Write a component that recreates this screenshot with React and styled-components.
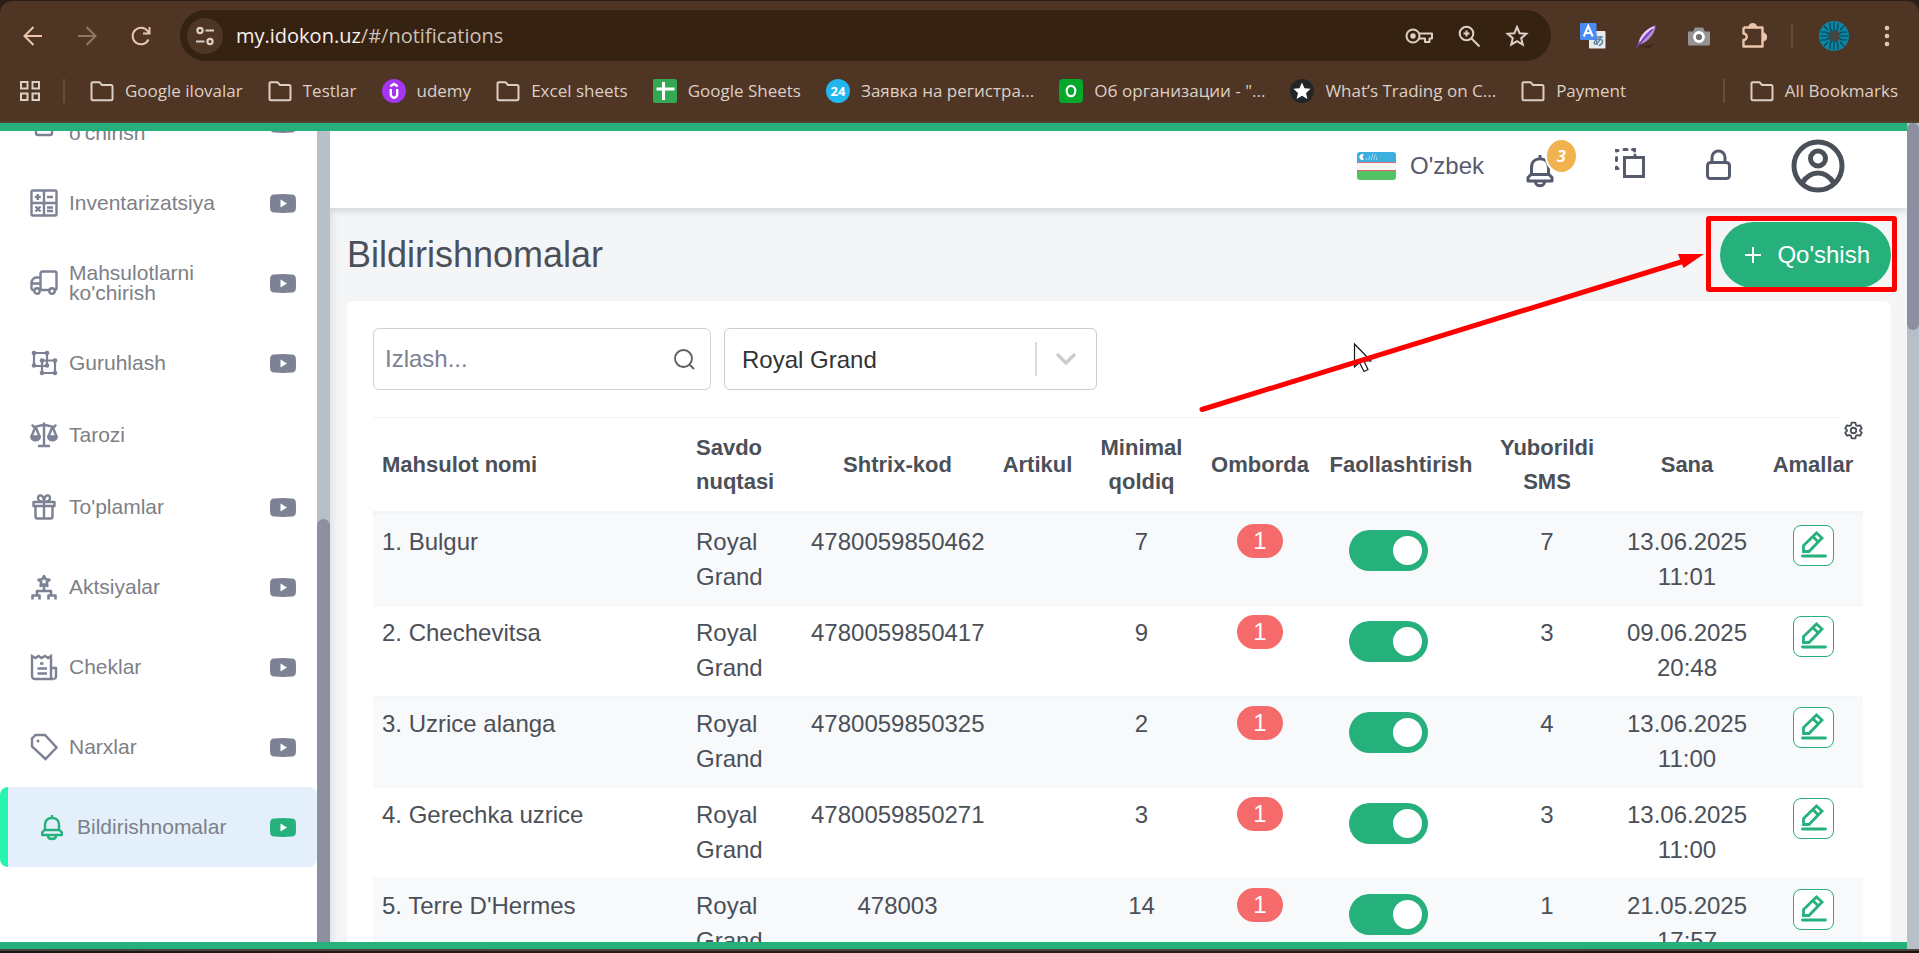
import React from "react";
import styled, { createGlobalStyle, css } from "styled-components";

const GREEN = "#25b07c";
const SLATE = "#7c8193";

const GlobalStyle = createGlobalStyle`
  * { box-sizing: border-box; }
  body {
    margin: 0;
    font-family: "Liberation Sans", Arial, sans-serif;
    color: #4b5058;
  }
  button, input, select { font: inherit; color: inherit; }
  svg { display: block; flex: none; }
`;

const Window = styled.div`
  height: 100vh;
  display: flex;
  flex-direction: column;
  overflow: hidden;
  background: #2a1d16;
`;

/* ---------- browser chrome ---------- */

const Chrome = styled.header`
  flex: none;
  margin-top: 1px;
  padding-top: 9px;
  background: #4e3524;
  border-radius: 12px 12px 0 0;
  border-bottom: 2px solid #55402f;
  color: #dccfc6;
  font-family: "Open Sans", "Noto Sans", sans-serif;
`;

const Toolbar = styled.div`
  display: flex;
  align-items: center;
  height: 51px;
  padding: 0 20px 0 21px;
`;

const IconButton = styled.button`
  display: flex;
  align-items: center;
  justify-content: center;
  flex: none;
  width: ${(p) => p.$size || 24}px;
  height: ${(p) => p.$size || 24}px;
  padding: 0;
  border: 0;
  background: none;
  color: ${(p) => p.$color || "inherit"};
`;

const NavButtons = styled.div`
  display: flex;
  gap: 30px;
  color: #ecc6ac;
`;

const Omnibox = styled.div`
  flex: 1;
  display: flex;
  align-items: center;
  height: 51px;
  margin: 0 30px 0 27px;
  padding: 0 22px 0 7px;
  border-radius: 26px;
  background: #352211;
`;

const SiteInfo = styled(IconButton)`
  width: 36px;
  height: 36px;
  border-radius: 50%;
  background: #4e3524;
`;

const Address = styled.div`
  flex: 1;
  margin-left: 13px;
  font-size: 20px;
  line-height: 28px;
  white-space: nowrap;
  color: #cdc0b6;
`;

const Host = styled.span`
  color: #f7f1ec;
`;

const OmniActions = styled.div`
  display: flex;
  align-items: center;
  gap: 24px;
`;

const Extensions = styled.div`
  display: flex;
  align-items: center;
  gap: 29px;
`;

const ExtensionList = styled.div`
  display: flex;
  align-items: center;
  gap: 29px;
  margin-right: -6px;
`;

const Divider = styled.span`
  flex: none;
  width: 2px;
  height: 24px;
  background: #6b4c33;
`;

const Bookmarks = styled.nav`
  display: flex;
  align-items: center;
  height: 60px;
  padding: 0 21px 0 18px;
  font-size: 17px;
  line-height: 24px;
`;

const BookmarkList = styled.div`
  flex: 1;
  display: flex;
  align-items: center;
  gap: 25px;
  margin-left: 21px;
`;

const Bookmark = styled.a`
  display: flex;
  align-items: center;
  gap: 11px;
  color: #dccfc6;
  text-decoration: none;
  white-space: nowrap;
`;

const AllBookmarks = styled.div`
  display: flex;
  align-items: center;
  gap: 25px;
`;

/* ---------- page ---------- */

const Page = styled.div`
  flex: 1;
  min-height: 0;
  display: flex;
`;

const Frame = styled.div`
  flex: 1;
  min-width: 0;
  position: relative;
  display: flex;
  background: #f4f5f7;
`;

const EdgeBar = styled.div`
  position: absolute;
  z-index: 5;
  left: 0;
  right: 0;
  ${(p) => (p.$bottom ? "bottom: 0; height: 7px;" : "top: 0; height: 8px;")}
  background: ${GREEN};
`;

const ScrollTrack = styled.div`
  flex: none;
  display: flex;
  flex-direction: column;
  justify-content: ${(p) => (p.$end ? "flex-end" : "flex-start")};
  width: ${(p) => p.$width}px;
  background: #b7bfc8;
`;

const ScrollThumb = styled.div`
  height: ${(p) => p.$share}%;
  border-radius: 7px;
  background: #8b8f9f;
`;

const Taskbar = styled.div`
  flex: none;
  height: 4px;
  border-top: 2px solid #4a423e;
  background: linear-gradient(90deg, #16181c, #2a1712 20%, #2b1c12 60%, #1c130d);
`;

/* ---------- sidebar ---------- */

const Sidebar = styled.nav`
  flex: none;
  display: flex;
  flex-direction: column;
  justify-content: flex-end;
  width: 317px;
  padding-bottom: 82px;
  overflow: hidden;
  background: #fff;
  font-size: 21px;
  line-height: 20px;
`;

const MenuItem = styled.a`
  flex: none;
  display: flex;
  align-items: center;
  height: ${(p) => (p.$compact ? 64 : 80)}px;
  padding: 0 21px 0 30px;
  color: ${SLATE};
  text-decoration: none;
  ${(p) =>
    p.$active &&
    css`
      border-left: 8px solid #27f5ac;
      border-radius: 8px;
      background: #e3f0fc;
      color: ${GREEN};
    `}
`;

const MenuLabel = styled.span`
  flex: 1;
  max-width: 160px;
  margin: 0 auto 0 11px;
  color: #7d8087;
`;

const VideoLink = styled.span`
  margin-left: auto;
`;

/* ---------- main ---------- */

const Main = styled.main`
  flex: 1;
  min-width: 0;
  display: flex;
  flex-direction: column;
  overflow: hidden;
  box-shadow: inset 5px 0 8px -4px rgba(60, 70, 90, 0.15);
`;

const TopBar = styled.div`
  flex: none;
  position: relative;
  display: flex;
  align-items: center;
  justify-content: flex-end;
  gap: 60px;
  height: 85px;
  padding-right: 62px;
  background: #fff;
  box-shadow: 0 2px 8px rgba(50, 60, 80, 0.2);
  color: #555a6e;
`;

const Language = styled.button`
  display: flex;
  align-items: center;
  gap: 14px;
  margin-right: -18px;
  padding: 0;
  border: 0;
  background: none;
  font-size: 24px;
  line-height: 28px;
`;

const BellButton = styled.button`
  position: relative;
  padding: 10px 0 0;
  border: 0;
  background: none;
`;

const Count = styled.span`
  position: absolute;
  top: -6px;
  left: 19px;
  width: 33px;
  height: 36px;
  border: 2px solid #fff;
  border-radius: 50%;
  background: #f0b350;
  color: #fff;
  font-family: "Open Sans", sans-serif;
  font-size: 16px;
  font-style: italic;
  font-weight: 700;
  line-height: 32px;
  text-align: center;
`;

const Content = styled.div`
  flex: 1;
  min-height: 0;
  position: relative;
  display: flex;
  flex-direction: column;
  padding: 0 16px 0 17px;
`;

const TitleRow = styled.div`
  flex: none;
  display: flex;
  align-items: center;
  justify-content: space-between;
  height: 93px;
`;

const Title = styled.h1`
  margin: 0;
  font-size: 36px;
  font-weight: 400;
  line-height: 44px;
`;

const AddWrap = styled.div`
  position: relative;
`;

const AddButton = styled.button`
  display: flex;
  align-items: center;
  gap: 16px;
  height: 66px;
  padding: 0 21px 0 25px;
  border: 0;
  border-radius: 33px;
  background: ${GREEN};
  color: #fff;
  font-size: 24px;
`;

const Highlight = styled.div`
  position: absolute;
  inset: -6px -6px -4px -14px;
  border: 5px solid #f00;
  border-radius: 3px;
  pointer-events: none;
`;

const Pointer = styled.svg`
  position: absolute;
  top: 36px;
  right: 200px;
  pointer-events: none;
`;

const Card = styled.section`
  flex: 1 0 auto;
  padding: 27px 28px 0 26px;
  border-radius: 7px 7px 0 0;
  background: #fff;
`;

const Filters = styled.div`
  display: flex;
  gap: 13px;
  margin-bottom: 27px;
  font-size: 24px;
`;

const SearchField = styled.label`
  display: flex;
  align-items: center;
  width: 338px;
  height: 62px;
  padding: 0 14px 0 11px;
  border: 1px solid #ced2db;
  border-radius: 6px;
`;

const SearchInput = styled.input`
  flex: 1;
  min-width: 0;
  padding: 0;
  border: 0;
  outline: 0;
  background: none;
  &::placeholder { color: ${SLATE}; opacity: 1; }
`;

const SelectField = styled.label`
  display: flex;
  align-items: center;
  position: relative;
  width: 373px;
  height: 62px;
  border: 1px solid #ccc;
  border-radius: 6px;
`;

const Select = styled.select`
  width: 100%;
  height: 100%;
  padding: 0 80px 0 17px;
  border: 0;
  border-radius: 6px;
  appearance: none;
  background: none;
  color: #333;
`;

const SelectMark = styled.svg`
  position: absolute;
  right: 18px;
  pointer-events: none;
`;

/* ---------- table ---------- */

const TableWrap = styled.div`
  position: relative;
`;

const TableSettings = styled.button`
  position: absolute;
  top: 0;
  right: 0;
  padding: 4px 0 0 2px;
  border: 0;
  background: #fff;
`;

const Table = styled.table`
  width: 100%;
  table-layout: fixed;
  border-collapse: separate;
  border-spacing: 0;
`;

const Th = styled.th`
  padding: 13px 9px 12px;
  border-top: 1px solid #f1f3f5;
  border-bottom: 3px solid #f3f4f6;
  font-size: 22px;
  line-height: 34px;
  text-align: ${(p) => (p.$left ? "left" : "center")};
`;

const Row = styled.tr`
  &:nth-child(odd) { background: #f8f9fb; }
`;

const Td = styled.td`
  height: 91px;
  padding: 9px 9px;
  border-top: 1px solid #f4f5f7;
  font-size: 24px;
  line-height: 35px;
  vertical-align: top;
  text-align: ${(p) => (p.$left ? "left" : "center")};
`;

const Stock = styled.span`
  display: block;
  width: 46px;
  margin: 0 auto;
  border-radius: 17px;
  background: #f56a6b;
  color: #fff;
  line-height: 34px;
`;

const Toggle = styled.input`
  appearance: none;
  display: flex;
  align-items: center;
  width: 79px;
  height: 41px;
  margin: 6px 0 0 21px;
  padding: 6px;
  border-radius: 21px;
  background: #b7bfc8;
  &::before {
    content: "";
    width: 29px;
    height: 29px;
    border-radius: 50%;
    background: #fff;
  }
  &:checked { justify-content: flex-end; background: ${GREEN}; }
`;

const EditButton = styled.button`
  display: block;
  width: 41px;
  height: 41px;
  margin: 1px auto 0;
  padding: 0;
  border: 1px solid ${GREEN};
  border-radius: 8px;
  background: #fff;
  color: ${GREEN};
`;

/* ---------- drawings ---------- */

const Line = ({ size = 24, box = 24, sw = 2, children, ...rest }) => (
  <svg
    width={size}
    height={size}
    viewBox={`0 0 ${box} ${box}`}
    fill="none"
    stroke="currentColor"
    strokeWidth={sw}
    strokeLinejoin="round"
    aria-hidden="true"
    {...rest}
  >
    {children}
  </svg>
);

const FolderIcon = () => (
  <Line>
    <path d="M1.500 5.200V20a1.300 1.300 0 0 0 1.300 1.300h18.400a1.300 1.300 0 0 0 1.300-1.300V7.300A1.300 1.300 0 0 0 21.200 6H12L9.500 3.200H2.800A1.300 1.300 0 0 0 1.500 4.500z" />
  </Line>
);

const AppsIcon = () => (
  <Line>
    <path strokeLinejoin="miter" d="M3 3h6.500v6.500H3zM14.500 3H21v6.500h-6.500zM3 14.500h6.500V21H3zM14.500 14.500H21V21h-6.500z" />
  </Line>
);

const BadgeText = styled.text`
  font-family: "Open Sans", sans-serif;
  font-size: 13px;
  font-weight: 700;
  fill: #fff;
`;

const UdemyIcon = () => (
  <svg width="24" height="24" viewBox="0 0 24 24" aria-hidden="true">
    <circle cx="12" cy="12" r="12" fill="#a435f0" />
    <path d="M8.800 10v5.500a3.200 3.200 0 0 0 6.400 0V10M8.300 7.200 12 5l3.700 2.200" fill="none" stroke="#fff" strokeWidth="2.400" />
  </svg>
);

const SheetsIcon = () => (
  <svg width="24" height="24" viewBox="0 0 24 24" aria-hidden="true">
    <rect width="24" height="24" rx="2" fill="#34a853" />
    <path d="M10.500 3v18M3.500 10h18" stroke="#fff" strokeWidth="3" />
  </svg>
);

const TwentyFourIcon = () => (
  <svg width="24" height="24" viewBox="0 0 24 24" aria-hidden="true">
    <circle cx="12" cy="12" r="12" fill="#21b6ec" />
    <BadgeText x="12" y="16.500" textAnchor="middle">24</BadgeText>
  </svg>
);

const LetterIcon = () => (
  <svg width="24" height="24" viewBox="0 0 24 24" aria-hidden="true">
    <rect width="24" height="24" rx="4" fill="#04a82b" />
    <ellipse cx="12" cy="12" rx="4.300" ry="5.200" fill="none" stroke="#fff" strokeWidth="2.200" />
  </svg>
);

const StarDiscIcon = () => (
  <svg width="24" height="24" viewBox="0 0 24 24" aria-hidden="true">
    <circle cx="12" cy="12" r="12" fill="#222426" />
    <path d="m12 3.500 2.500 5.800 6.100.500-4.600 4.100 1.400 6.100L12 16.800 6.600 20 8 13.900 3.400 9.800l6.100-.500z" fill="#fff" />
  </svg>
);

const BackIcon = () => (
  <Line><path d="M21 12H4M12.500 3 3.500 12l9 9" strokeLinejoin="miter" /></Line>
);
const ForwardIcon = () => (
  <Line><path d="M3 12h17M11.500 3l9 9-9 9" strokeLinejoin="miter" /></Line>
);
const ReloadIcon = () => (
  <Line><path d="M19.500 15.500A8.300 8.300 0 1 1 18.600 7l1.500 2M20.500 3v6.500H14" strokeLinejoin="miter" /></Line>
);
const TuneIcon = () => (
  <Line size={24} sw={2.2}>
    <circle cx="7" cy="6.500" r="2.600" />
    <circle cx="17" cy="17.500" r="2.600" />
    <path d="M12.500 6.500H21M3 17.500h8.500" />
  </Line>
);
const KeyIcon = () => (
  <Line size={28} box={28}>
    <circle cx="8" cy="14" r="6.500" />
    <circle cx="8" cy="14" r="2.700" fill="currentColor" stroke="none" />
    <path d="M14 11.500h13v5h-2.500v3.500h-4.500v-3.500h-6" />
  </Line>
);
const ZoomIcon = () => (
  <Line>
    <circle cx="9.500" cy="9.500" r="6.800" />
    <path d="m14.500 14.500 8 8M9.500 6.500v6M6.500 9.500h6" />
  </Line>
);
const StarIcon = () => (
  <Line><path strokeLinejoin="miter" d="m12 3 2.600 6.200 6.700.600-5.100 4.400 1.600 6.500L12 17.200l-5.800 3.500 1.600-6.500L2.700 9.800l6.700-.600z" /></Line>
);
const TranslateIcon = () => (
  <svg width="26" height="26" viewBox="0 0 26 26" aria-hidden="true">
    <rect x="9" y="8" width="16.500" height="17.500" rx="1" fill="#e8ebee" />
    <path d="M12 14h11M16 11.500c0 5 0 8 1.500 10.500M21 13c-1 5-4 8.500-6 8s0-4.500 3-5 5 1 4.500 3-2 3-3.500 3.500" fill="none" stroke="#5f86a3" strokeWidth="1.500" />
    <rect width="16.500" height="17" rx="1" fill="#4a8af4" />
    <path d="M3.800 13.500 8.200 3l4.500 10.500M5.500 10h5.500" fill="none" stroke="#fff" strokeWidth="2.100" />
  </svg>
);
const FeatherIcon = () => (
  <svg width="24" height="26" viewBox="0 0 24 26" aria-hidden="true">
    <path d="M4 24c5 0 12-1 16-4l-4 4.500z" fill="#33231a" />
    <path d="M22 2C13 5 5 12 4 22c8-2 16-8 18-20z" fill="#b58ade" />
    <path d="M22 2C16 9 9 16 2.500 24.500" fill="none" stroke="#6d38a8" strokeWidth="1.500" />
    <path d="M20.500 4C13 7 8 12 6 18" fill="none" stroke="#eadcf7" strokeWidth="1.500" />
  </svg>
);
const CameraIcon = () => (
  <svg width="24" height="24" viewBox="0 0 24 24" aria-hidden="true">
    <path d="M1 7.500h5l2-4h8l2 4h5V20a1.500 1.500 0 0 1-1.500 1.500h-19A1.500 1.500 0 0 1 1 20z" fill="#949494" />
    <circle cx="12" cy="13" r="4.500" fill="#6f6f6f" stroke="#fff" strokeWidth="2.800" />
  </svg>
);
const PuzzleIcon = () => (
  <Line size={26} box={26} sw={2.4}>
    <path d="M2.500 4.500h6.500M2.500 4.500v6a3.200 3.200 0 0 1 0 6.500v6.500h19v-6M21.500 10.500v-6H15" />
    <path d="M8.500 4.500a3 3 0 0 1 6.500 0zM21.500 10.500a3.200 3.200 0 0 1 0 7z" fill="currentColor" />
  </Line>
);
const ProfileIcon = () => (
  <svg width="30" height="30" viewBox="0 0 30 30" aria-hidden="true">
    <circle cx="15" cy="15" r="15" fill="#0b86a2" />
    <g stroke="#073f52" strokeWidth="1.200" fill="none">
      <path d="M15 1v9M11 2v5l2 3M19 2v5l-2 3M15 29v-9M11 28v-5l2-3M19 28v-5l-2-3M1 15h9M2 11h5l3 2M2 19h5l3-2M29 15h-9M28 11h-5l-3 2M28 19h-5l-3-2M5 5l4 4M25 5l-4 4M5 25l4-4M25 25l-4-4" />
    </g>
    <rect x="10" y="10" width="10" height="10" rx="1" fill="#454545" />
  </svg>
);
const DotsIcon = () => (
  <svg width="6" height="24" viewBox="0 0 6 24" fill="currentColor" aria-hidden="true">
    <circle cx="3" cy="4" r="2.300" /><circle cx="3" cy="12" r="2.300" /><circle cx="3" cy="20" r="2.300" />
  </svg>
);

const VideoIcon = () => (
  <svg width="26" height="19" viewBox="0 0 26 19" aria-hidden="true">
    <path d="M4 .400Q13-.200 22 .400q3.500.200 3.800 3.600.400 5.500 0 11-.300 3.400-3.800 3.600-9 .600-18 0Q.500 18.400.200 15q-.400-5.500 0-11Q.500.600 4 .400z" fill="currentColor" />
    <path d="m10.500 5.500 6.500 4-6.500 4z" fill="#fff" />
  </svg>
);

const Menu28 = (props) => <Line size={28} box={28} sw={2.4} {...props} />;

const BoxIcon = () => <Menu28><rect x="6" y="2" width="16" height="24" rx="2" /></Menu28>;
const InventoryIcon = () => (
  <Menu28>
    <rect x="1.500" y="1.500" width="25" height="25" rx="1.500" />
    <path d="M14 1.500v25M1.500 14h25M7.800 5v6M4.800 8h6M17 8h6M5.500 17.500l5 5M10.500 17.500l-5 5M17 18.500h6M17 22h6" />
  </Menu28>
);
const TruckIcon = () => (
  <Menu28>
    <path d="M10.500 21V4.500a2 2 0 0 1 2-2h12a2 2 0 0 1 2 2V19a2 2 0 0 1-2 2M10.500 21h8.500M4 21.500a2.500 2.500 0 0 1-2.500-2.500v-5c0-2.500 2-5.500 5-5.500h4M2 14.500h8.500" />
    <circle cx="7" cy="22" r="2.700" /><circle cx="22" cy="22" r="2.700" />
  </Menu28>
);
const GroupIcon = () => (
  <Menu28 sw={2.2}>
    <path d="M4 4h13v13H4zM12 11.500h13V24H12z" />
    <g fill="currentColor" stroke="none">
      {[[4, 4], [17, 4], [4, 16.5], [17, 16.5], [12, 11.5], [25, 11.5], [12, 24], [25, 24]].map(([x, y]) => (
        <circle key={`${x}-${y}`} cx={x} cy={y} r="2.300" />
      ))}
    </g>
  </Menu28>
);
const ScalesIcon = () => (
  <Menu28>
    <path d="M14 1.500v23M8 25h12M3 5.500c5 1 6-1.500 11-1.500s6 2.500 11 1.500M5.500 5.500l-4 10M5.500 5.500l4 10M22.500 5.500l-4 10M22.500 5.500l4 10M2 3.500l1.500 2.500M26 3.500l-1.500 2.500" />
    <path d="M1.300 15.500h8.500c0 5-8.500 5-8.500 0zM18.200 15.500h8.500c0 5-8.500 5-8.500 0z" fill="currentColor" />
  </Menu28>
);
const GiftIcon = () => (
  <Menu28>
    <path d="M3.500 9h21v4h-21zM5.500 13h17v10.500a2 2 0 0 1-2 2h-13a2 2 0 0 1-2-2zM14 9v16.500M14 9c-3 0-6-1-6-4 0-4 6-4 6 4zM14 9c3 0 6-1 6-4 0-4-6-4-6 4z" />
  </Menu28>
);
const PromoIcon = () => (
  <Menu28 sw={2.6}>
    <path d="m14 3 1.600 3.200 3.900.500-2.800 2.600.700 3.700-3.400-1.700-3.400 1.700.700-3.700-2.800-2.600 3.900-.500zM14 13v5M7 22v-4h14v4M2.500 26.500v-4h7v4M18.500 26.500v-4h7v4" />
  </Menu28>
);
const ReceiptIcon = () => (
  <Menu28>
    <path strokeLinejoin="miter" d="M2 3l3.500 2 3-2 3 2 3.500-2 3 2 3-2v20.500c0 2 1 2.500 2.500 2.500H5a3 3 0 0 1-3-3z" />
    <path d="M21.500 15H26v8.500a2.500 2.500 0 0 1-2.500 2.500M10 10.500h3.500M7.500 15.500H17M7.500 20.500H17" />
  </Menu28>
);
const TagIcon = () => (
  <Menu28>
    <path strokeLinejoin="miter" d="M2 5.500 5.500 2H15l11.500 12.500L15.500 26 2 13.500z" />
    <circle cx="8" cy="8" r="1.500" fill="currentColor" stroke="none" />
  </Menu28>
);

const BellIcon = ({ width, height }) => (
  <svg width={width} height={height} viewBox="0 0 28 34" fill="none" stroke="currentColor" strokeWidth="3" strokeLinejoin="round" aria-hidden="true">
    <path d="M14 1v3.500M5.500 20.500v-7C5.500 8 9 4.800 14 4.800s8.500 3.200 8.500 8.700v7" />
    <path d="M5 20.500h18l3 3v3.500H2v-3.500zM9.500 28c0 5 9 5 9 0" />
  </svg>
);
const MenuBell = () => (
  <svg width="28" height="28" viewBox="0 0 28 28" fill="none" stroke="currentColor" strokeWidth="2.400" strokeLinejoin="round" aria-hidden="true">
    <path d="M14 2v3M7 17v-5.500c0-4 2.800-6.500 7-6.500s7 2.500 7 6.500V17M6.500 17h15l2.300 2.300V22H4.200v-2.700zM10 23c0 4 8 4 8 0" />
  </svg>
);

const Flag = () => (
  <svg width="39" height="28" viewBox="0 0 39 28" aria-hidden="true">
    <clipPath id="flag"><rect width="39" height="28" rx="3" /></clipPath>
    <g clipPath="url(#flag)">
      <rect width="39" height="28" fill="#f5f5f6" />
      <rect width="39" height="10" fill="#3cafe0" />
      <rect y="10" width="39" height="1" fill="#e8646f" />
      <rect y="18" width="39" height="1" fill="#e8646f" />
      <rect y="19" width="39" height="9" fill="#52c364" />
      <path d="M7 2.500a3 3 0 1 0 0 5 3.500 3.500 0 0 1 0-5z" fill="#fff" />
      <path d="M9 7h11M12 5h8M15 3h5" stroke="#fff" strokeDasharray="1 1.500" />
    </g>
  </svg>
);

const CopyIcon = () => (
  <svg width="32" height="38" viewBox="0 0 32 38" fill="none" stroke="currentColor" strokeWidth="3" aria-hidden="true">
    <rect x="10.500" y="10.500" width="19" height="19" />
    <path strokeLinecap="round" d="M2.500 4v-.500H4M10 2.500h3M18.500 2.500h2v1.500M2.500 10.500v3M2.500 20v1.500H4M21 8v.500" />
  </svg>
);
const LockIcon = () => (
  <svg width="25" height="34" viewBox="0 0 25 34" fill="none" stroke="currentColor" strokeWidth="3" aria-hidden="true">
    <rect x="1.500" y="13.500" width="22" height="16" rx="3" />
    <path d="M6 13V8.500a6.500 6.500 0 0 1 13 0V13" />
  </svg>
);
const AccountIcon = () => (
  <svg width="54" height="54" viewBox="0 0 54 54" fill="none" stroke="#4a5058" strokeWidth="5" aria-hidden="true">
    <circle cx="27" cy="27" r="24" />
    <circle cx="27" cy="19.500" r="7.500" />
    <path d="M11 44c4-6 9-10 16-10s12 4 16 10" />
  </svg>
);
const SearchIcon = () => (
  <Line size={24} sw={1.800} color="#5a5c60">
    <circle cx="11.500" cy="11.500" r="8.500" /><path d="m17.800 17.800 4.200 4.200" />
  </Line>
);
const GearIcon = () => (
  <Line size={19} sw={2.3}>
    <circle cx="12" cy="12" r="3.500" />
    <path d="M9.700 2h4.600l.800 3.200 2 1.100 3.100-.900 2.300 4-2.300 2.200v.800l2.300 2.200-2.300 4-3.100-.900-2 1.100-.800 3.200H9.700l-.800-3.200-2-1.100-3.100.900-2.300-4 2.300-2.200v-.800L1.500 9.400l2.300-4 3.100.900 2-1.100z" />
  </Line>
);
const PencilIcon = () => (
  <Line size={39} box={39} sw={2.800} strokeLinejoin="miter">
    <path d="M9.500 25.500v-6L22.500 7l5.500 5-13 13.500zM18.800 10.500l5.500 5.500" />
    <path d="M8.500 30h23" strokeLinecap="round" />
  </Line>
);

/* ---------- data ---------- */

const bookmarks = [
  ["Google ilovalar", FolderIcon],
  ["Testlar", FolderIcon],
  ["udemy", UdemyIcon],
  ["Excel sheets", FolderIcon],
  ["Google Sheets", SheetsIcon],
  ["Заявка на регистра...", TwentyFourIcon],
  ['Об организации - "...', LetterIcon],
  ["What’s Trading on C...", StarDiscIcon],
  ["Payment", FolderIcon],
];

const menu = [
  { label: "Mahsulotlarni o'chirish", Icon: BoxIcon },
  { label: "Inventarizatsiya", Icon: InventoryIcon },
  { label: "Mahsulotlarni ko'chirish", Icon: TruckIcon },
  { label: "Guruhlash", Icon: GroupIcon },
  { label: "Tarozi", Icon: ScalesIcon, compact: true },
  { label: "To'plamlar", Icon: GiftIcon },
  { label: "Aktsiyalar", Icon: PromoIcon },
  { label: "Cheklar", Icon: ReceiptIcon },
  { label: "Narxlar", Icon: TagIcon },
  { label: "Bildirishnomalar", Icon: MenuBell, active: true },
];

const columns = [
  { label: "Mahsulot nomi", left: true },
  { label: "Savdo nuqtasi", width: 115, left: true },
  { label: "Shtrix-kod", width: 191 },
  { label: "Artikul", width: 89 },
  { label: "Minimal qoldiq", width: 119 },
  { label: "Omborda", width: 118 },
  { label: "Faollashtirish", width: 164 },
  { label: "Yuborildi SMS", width: 128 },
  { label: "Sana", width: 152 },
  { label: "Amallar", width: 100 },
];

const rows = [
  ["Bulgur", "4780059850462", 7, 1, 7, "13.06.2025 11:01"],
  ["Chechevitsa", "4780059850417", 9, 1, 3, "09.06.2025 20:48"],
  ["Uzrice alanga", "4780059850325", 2, 1, 4, "13.06.2025 11:00"],
  ["Gerechka uzrice", "4780059850271", 3, 1, 3, "13.06.2025 11:00"],
  ["Terre D'Hermes", "478003", 14, 1, 1, "21.05.2025 17:57"],
];

function BrowserChrome() {
  return (
    <Chrome>
      <Toolbar>
        <NavButtons>
          <IconButton aria-label="Back"><BackIcon /></IconButton>
          <IconButton aria-label="Forward" $color="#93765f"><ForwardIcon /></IconButton>
          <IconButton aria-label="Reload"><ReloadIcon /></IconButton>
        </NavButtons>
        <Omnibox>
          <SiteInfo aria-label="Site information"><TuneIcon /></SiteInfo>
          <Address><Host>my.idokon.uz</Host>/#/notifications</Address>
          <OmniActions>
            <IconButton aria-label="Passwords" $size={28}><KeyIcon /></IconButton>
            <IconButton aria-label="Zoom"><ZoomIcon /></IconButton>
            <IconButton aria-label="Bookmark"><StarIcon /></IconButton>
          </OmniActions>
        </Omnibox>
        <Extensions>
          <ExtensionList>
            <IconButton aria-label="Translate"><TranslateIcon /></IconButton>
            <IconButton aria-label="Feather"><FeatherIcon /></IconButton>
            <IconButton aria-label="Screenshot"><CameraIcon /></IconButton>
            <IconButton aria-label="Extensions" $size={28} $color="#ecc6ac"><PuzzleIcon /></IconButton>
          </ExtensionList>
          <Divider />
          <IconButton aria-label="Profile"><ProfileIcon /></IconButton>
          <IconButton aria-label="Menu" $color="#ecc6ac"><DotsIcon /></IconButton>
        </Extensions>
      </Toolbar>
      <Bookmarks aria-label="Bookmarks">
        <IconButton aria-label="Apps"><AppsIcon /></IconButton>
        <BookmarkList>
          <Divider />
          {bookmarks.map(([label, Icon]) => (
            <Bookmark href="#" key={label}><Icon />{label}</Bookmark>
          ))}
        </BookmarkList>
        <AllBookmarks>
          <Divider />
          <Bookmark href="#"><FolderIcon />All Bookmarks</Bookmark>
        </AllBookmarks>
      </Bookmarks>
    </Chrome>
  );
}

function NotificationsTable() {
  return (
    <TableWrap>
      <Table>
        <colgroup>
          {columns.map((c) => <col key={c.label} width={c.width} />)}
        </colgroup>
        <thead>
          <tr>
            {columns.map((c) => <Th key={c.label} scope="col" $left={c.left}>{c.label}</Th>)}
          </tr>
        </thead>
        <tbody>
          {rows.map(([name, code, min, stock, sms, date], i) => (
            <Row key={name}>
              <Td $left>{`${i + 1}. ${name}`}</Td>
              <Td $left>Royal Grand</Td>
              <Td>{code}</Td>
              <Td />
              <Td>{min}</Td>
              <Td><Stock>{stock}</Stock></Td>
              <Td><Toggle type="checkbox" defaultChecked aria-label={`Faollashtirish ${name}`} /></Td>
              <Td>{sms}</Td>
              <Td>{date}</Td>
              <Td><EditButton aria-label={`Edit ${name}`}><PencilIcon /></EditButton></Td>
            </Row>
          ))}
        </tbody>
      </Table>
      <TableSettings aria-label="Table settings"><GearIcon /></TableSettings>
    </TableWrap>
  );
}

export default function App() {
  return (
    <Window>
      <GlobalStyle />
      <BrowserChrome />
      <Page>
        <Frame>
          <EdgeBar />
          <Sidebar aria-label="Main menu">
            {menu.map(({ label, Icon, compact, active }) => (
              <MenuItem href="#" key={label} $compact={compact} $active={active}>
                <Icon />
                <MenuLabel>{label}</MenuLabel>
                {!compact && <VideoLink><VideoIcon /></VideoLink>}
              </MenuItem>
            ))}
          </Sidebar>
          <ScrollTrack $width={13} $end><ScrollThumb $share={52} /></ScrollTrack>
          <Main>
            <TopBar>
              <Language><Flag />O'zbek</Language>
              <BellButton aria-label="Notifications">
                <BellIcon width={28} height={34} />
                <Count>3</Count>
              </BellButton>
              <IconButton aria-label="Copy" $size={32}><CopyIcon /></IconButton>
              <IconButton aria-label="Lock" $size={25}><LockIcon /></IconButton>
              <IconButton aria-label="Account" $size={54}><AccountIcon /></IconButton>
            </TopBar>
            <Content>
              <TitleRow>
                <Title>Bildirishnomalar</Title>
                <AddWrap>
                  <AddButton>
                    <Line size={16} box={16}><path d="M8 0v16M0 8h16" /></Line>
                    Qo'shish
                  </AddButton>
                  <Highlight />
                </AddWrap>
              </TitleRow>
              <Card>
                <Filters>
                  <SearchField>
                    <SearchInput type="text" placeholder="Izlash..." aria-label="Izlash" />
                    <SearchIcon />
                  </SearchField>
                  <SelectField>
                    <Select aria-label="Savdo nuqtasi" defaultValue="Royal Grand">
                      <option>Royal Grand</option>
                    </Select>
                    <SelectMark width="44" height="36" viewBox="0 0 44 36" fill="none" stroke="#ccc">
                      <path d="M2 1v34" strokeWidth="1.500" />
                      <path d="m24 14 8 8 8-8" strokeWidth="3.500" strokeLinecap="round" strokeLinejoin="round" />
                    </SelectMark>
                  </SelectField>
                </Filters>
                <NotificationsTable />
              </Card>
              <Pointer width="510" height="172" viewBox="0 0 510 172" aria-hidden="true">
                <path d="M157.500 100v23l5-4.500 4.500 9 4-2-4-8.500h7z" fill="#fff" stroke="#15161c" strokeWidth="1.200" />
                <path d="M5 165.500 484 18" stroke="#f00" strokeWidth="5" strokeLinecap="round" />
                <path d="M507 10h-26l5.500 14z" fill="#f00" />
              </Pointer>
            </Content>
          </Main>
          <EdgeBar $bottom />
        </Frame>
        <ScrollTrack $width={12}><ScrollThumb $share={25} /></ScrollTrack>
      </Page>
      <Taskbar />
    </Window>
  );
}
